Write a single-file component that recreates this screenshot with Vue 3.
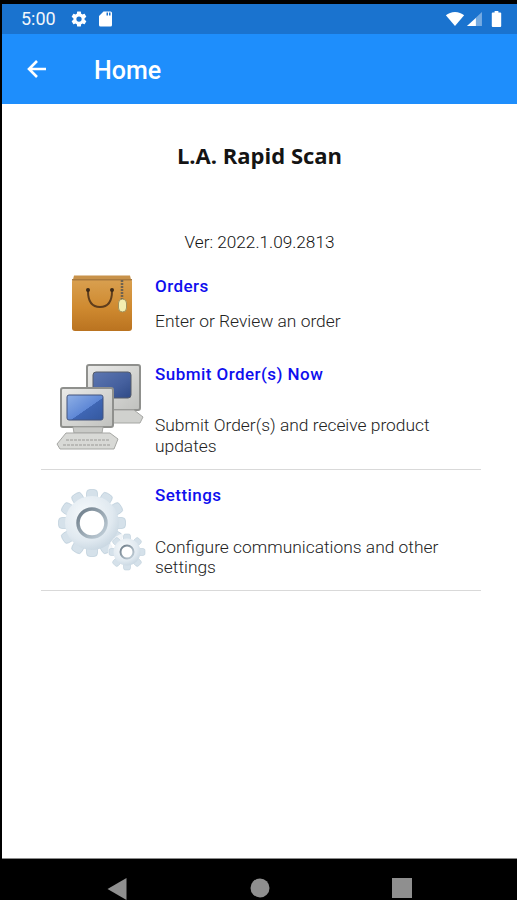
<script setup>
const teeth = [0, 30, 60, 90, 120, 150, 180, 210, 240, 270, 300, 330]
const smallTeeth = [0, 45, 90, 135, 180, 225, 270, 315]
</script>

<template>
  <div class="screen">
    <div class="device">
      <header class="status">
        <span class="time">5:00</span>
        <svg class="st-gear" viewBox="0 0 24 24" width="18" height="18"><path fill="#fff" d="M19.4 13c.04-.33.06-.66.06-1s-.02-.67-.06-1l2.1-1.65c.2-.15.25-.42.13-.64l-2-3.46c-.12-.22-.39-.3-.61-.22l-2.49 1a7.3 7.3 0 0 0-1.69-.98l-.38-2.65A.49.49 0 0 0 14 2h-4c-.25 0-.46.18-.49.42l-.38 2.65c-.61.25-1.17.59-1.69.98l-2.49-1c-.23-.09-.49 0-.61.22l-2 3.46c-.13.22-.07.49.12.64L4.56 11a7.9 7.9 0 0 0 0 2l-2.11 1.65c-.19.15-.24.42-.12.64l2 3.46c.12.22.39.3.61.22l2.49-1c.52.4 1.08.73 1.69.98l.38 2.65c.03.24.24.42.49.42h4c.25 0 .46-.18.49-.42l.38-2.65c.61-.25 1.17-.59 1.69-.98l2.49 1c.23.09.49 0 .61-.22l2-3.46c.12-.22.07-.49-.13-.64L19.4 13zM12 15.500a3.500 3.500 0 1 1 0-7 3.500 3.500 0 0 1 0 7z"/></svg>
        <svg class="st-sd" viewBox="0 0 14 16" width="15" height="16"><path fill="#fff" d="M5 0.5h7a1.500 1.500 0 0 1 1.500 1.500v12a1.500 1.500 0 0 1-1.500 1.500H2A1.500 1.500 0 0 1 .5 14V5zM8 1.500v3h1.500v-3zM10.500 1.500v3H12v-3z" fill-rule="evenodd"/></svg>
        <span class="spacer"></span>
        <svg class="st-wifi" viewBox="0 0 20 15" width="20" height="14"><path fill="#fff" d="M10 15 .2 3.600C2.800 1.400 6.200 0 10 0s7.200 1.400 9.800 3.600z"/></svg>
        <svg class="st-signal" viewBox="0 0 16 15" width="15" height="14"><path fill="#fff" fill-opacity=".4" d="M16 0v15H0z"/><path fill="#fff" d="M9.500 6.500V15H0z"/></svg>
        <svg class="st-batt" viewBox="0 0 11 17" width="11" height="16"><path fill="#fff" d="M3.500 0h4v1.500h2a1 1 0 0 1 1 1V16a1 1 0 0 1-1 1h-8a1 1 0 0 1-1-1V2.500a1 1 0 0 1 1-1h2z"/></svg>
      </header>

      <div class="toolbar">
        <svg class="back" viewBox="0 0 24 24" width="24" height="24"><path fill="none" stroke="#fff" stroke-width="2.600" d="M21 12H4.500M12 4l-8 8 8 8"/></svg>
        <span class="tb-title">Home</span>
      </div>

      <main class="content">
        <h1 class="app-title">L.A. Rapid Scan</h1>
        <p class="version">Ver: 2022.1.09.2813</p>

        <div class="menu">
          <section class="row row-orders">
            <div class="icon-cell">
              <svg viewBox="0 0 62 60" width="62" height="60">
                <defs>
                  <linearGradient id="bag" x1="0" y1="0" x2="0" y2="1">
                    <stop offset="0" stop-color="#d9a050"/>
                    <stop offset=".55" stop-color="#cf8a30"/>
                    <stop offset="1" stop-color="#ba7320"/>
                  </linearGradient>
                </defs>
                <path d="M3 2.500h56l1.500 6H1.500z" fill="#c8924a"/>
                <rect x="1" y="6" width="60" height="52" rx="3" fill="url(#bag)"/>
                <rect x="1" y="6" width="60" height="1.500" fill="#a97a3e"/>
                <path d="M17 18c0 10 3 16 12 16s12-6 12-16" fill="none" stroke="#5e3d1c" stroke-width="2"/>
                <circle cx="17" cy="17" r="2" fill="#3d2a18"/>
                <circle cx="41" cy="17" r="2" fill="#3d2a18"/>
                <path d="M51 7v20" stroke="#6e6250" stroke-width="2.500" stroke-dasharray="2 1"/>
                <rect x="47.500" y="26" width="8" height="13" rx="4" fill="#f3eeb0" stroke="#a2905a"/>
              </svg>
            </div>
            <div class="texts">
              <div class="link">Orders</div>
              <div class="desc desc-orders">Enter or Review an order</div>
            </div>
          </section>

          <section class="row row-submit divided">
            <div class="icon-cell">
              <svg viewBox="0 0 90 90" width="90" height="90">
                <defs>
                  <linearGradient id="case" x1="0" y1="0" x2="1" y2="1">
                    <stop offset="0" stop-color="#ebebe9"/>
                    <stop offset="1" stop-color="#c0c1be"/>
                  </linearGradient>
                  <linearGradient id="scrA" x1="0" y1="0" x2="1" y2="1">
                    <stop offset="0" stop-color="#8fb0e6"/>
                    <stop offset=".55" stop-color="#5f88d6"/>
                    <stop offset=".56" stop-color="#3f66b4"/>
                    <stop offset="1" stop-color="#34589f"/>
                  </linearGradient>
                  <linearGradient id="scrB" x1="0" y1="0" x2="1" y2="1">
                    <stop offset="0" stop-color="#5d77b2"/>
                    <stop offset=".6" stop-color="#45609e"/>
                    <stop offset="1" stop-color="#2f4a86"/>
                  </linearGradient>
                </defs>
                <g>
                  <rect x="31" y="3" width="53" height="45" rx="2" fill="url(#case)" stroke="#8f908d" stroke-width="2"/>
                  <rect x="37" y="10" width="38" height="26" rx="3" fill="url(#scrB)" stroke="#565c68"/>
                  <path d="M42 48h36l9 7-3 6H56l-6-3z" fill="#d0d1ce" stroke="#a5a6a3"/>
                </g>
                <g>
                  <rect x="5" y="26" width="52" height="39" rx="2" fill="url(#case)" stroke="#8f908d" stroke-width="2"/>
                  <rect x="11" y="33" width="36" height="25" rx="2" fill="url(#scrA)" stroke="#44557c"/>
                  <path d="M17 65h30l-1 6H18z" fill="#c9cac7" stroke="#a5a6a3"/>
                  <path d="M10 71h44l8 6-4 10H4l-3-5z" fill="#d8d9d6" stroke="#a5a6a3"/>
                  <path d="M10 78h44M7 83h48" stroke="#aeafac" stroke-width="1.500" stroke-dasharray="3 1"/>
                </g>
              </svg>
            </div>
            <div class="texts">
              <div class="link">Submit Order(s) Now</div>
              <div class="desc">Submit Order(s) and receive product updates</div>
            </div>
          </section>

          <section class="row row-settings divided">
            <div class="icon-cell">
              <svg viewBox="0 0 92 86" width="92" height="86">
                <defs>
                  <radialGradient id="gear" cx=".4" cy=".35" r=".8">
                    <stop offset="0" stop-color="#f7fafc"/>
                    <stop offset=".6" stop-color="#e0e9f0"/>
                    <stop offset="1" stop-color="#bccdda"/>
                  </radialGradient>
                  <linearGradient id="ring" x1="0" y1="0" x2="1" y2="1">
                    <stop offset="0" stop-color="#6c7b87"/>
                    <stop offset="1" stop-color="#c4d2dc"/>
                  </linearGradient>
                </defs>
                <g transform="translate(36 36)">
                  <rect v-for="a in teeth" :key="a" x="-5.500" y="-33.500" width="11" height="12" rx="3.500" fill="#d5e1ea" stroke="#b6c9d6" stroke-width=".6" :transform="`rotate(${a})`"/>
                  <circle r="27" fill="url(#gear)"/>
                  <circle r="14" fill="#fff" stroke="url(#ring)" stroke-width="3.500"/>
                </g>
                <g transform="translate(71 65)">
                  <circle r="19" fill="#fff" opacity=".7"/>
                  <rect v-for="a in smallTeeth" :key="a" x="-3.500" y="-18" width="7" height="7" rx="2" fill="#d5e1ea" stroke="#b6c9d6" stroke-width=".5" :transform="`rotate(${a})`"/>
                  <circle r="13.500" fill="url(#gear)"/>
                  <circle r="6.500" fill="#fff" stroke="url(#ring)" stroke-width="2"/>
                </g>
              </svg>
            </div>
            <div class="texts">
              <div class="link link-settings">Settings</div>
              <div class="desc desc-settings">Configure communications and other settings</div>
            </div>
          </section>
        </div>
      </main>

      <footer class="nav">
        <svg viewBox="0 0 20 22" width="20" height="22"><path fill="#8f8f8f" d="M19.500 0v22L.5 11z"/></svg>
        <svg viewBox="0 0 20 20" width="20" height="20"><circle cx="10" cy="10" r="9.500" fill="#8f8f8f"/></svg>
        <svg viewBox="0 0 20 20" width="20" height="20"><rect width="20" height="20" fill="#8f8f8f"/></svg>
      </footer>
    </div>
  </div>
</template>

<style>
html, body { margin: 0; background: #000; }
</style>

<style scoped>
.screen {
  width: 517px;
  height: 900px;
  background: #000;
  overflow: hidden;
  font-family: Roboto, "Liberation Sans", sans-serif;
}
.device {
  height: 896px;
  padding: 4px 0 0 2px;
  display: flex;
  flex-direction: column;
}
.status {
  height: 30px;
  flex: none;
  background: #1a73cf;
  display: flex;
  align-items: center;
  padding: 0 15px 0 19px;
  color: #f2f6fb;
}
.time { font-size: 18px; line-height: 20px; }
.st-gear { margin-left: 14px; }
.st-sd { margin-left: 10px; margin-top: -1px; }
.spacer { flex: 1; }
.st-signal { margin-left: 2px; }
.st-batt { margin-left: 9px; }
.toolbar {
  height: 70px;
  flex: none;
  background: #1e8efc;
  display: flex;
  align-items: center;
  color: #fff;
}
.back { margin-left: 23px; }
.tb-title {
  margin-left: 45px;
  margin-top: 3px;
  font-size: 25px;
  font-weight: 500;
  line-height: 30px;
}
.content {
  flex: 1;
  background: #fff;
  min-height: 0;
  border-bottom: 1px solid #8a8a8a;
}
.app-title {
  margin: 36px 0 0;
  text-align: center;
  font-family: "Open Sans", sans-serif;
  font-size: 22px;
  font-weight: 700;
  line-height: 30px;
  color: #141414;
}
.version {
  margin: 62px 0 0;
  text-align: center;
  font-size: 17.200px;
  font-weight: 300;
  line-height: 20px;
  color: #111;
}
.menu {
  margin: 13px 36px 0 39px;
}
.row {
  display: flex;
  box-sizing: border-box;
}
.row-orders { height: 88px; }
.row-submit { height: 117px; }
.row-settings { height: 121px; }
.divided { border-bottom: 1px solid #d9d9d9; }
.icon-cell {
  width: 114px;
  flex: none;
  display: flex;
}
.icon-cell svg { filter: blur(.5px); }
.row-orders svg { margin: 8px 0 0 30px; }
.row-submit svg { margin: 9px 0 0 15px; }
.row-settings svg { margin: 17px 0 0 15px; }
.texts { flex: 1; min-width: 0; }
.link {
  font-size: 17px;
  font-weight: 500;
  line-height: 20px;
  color: #0f0fee;
  letter-spacing: .45px;
  margin-top: 11px;
}
.link-settings { margin-top: 15px; }
.desc {
  margin-top: 31px;
  font-size: 17.400px;
  font-weight: 300;
  line-height: 20.500px;
  color: #222;
}
.desc-orders { margin-top: 15px; }
.desc-settings { margin-top: 32px; line-height: 20px; }
.nav {
  height: 41px;
  margin: 0 0 0 -2px;
  flex: none;
  background: #000;
  display: flex;
  align-items: flex-start;
  padding-top: 19px;
  box-sizing: border-box;
}
.nav svg:nth-child(1) { margin-left: 107px; }
.nav svg:nth-child(2) { margin-left: 123px; }
.nav svg:nth-child(3) { margin-left: 122px; }
</style>
